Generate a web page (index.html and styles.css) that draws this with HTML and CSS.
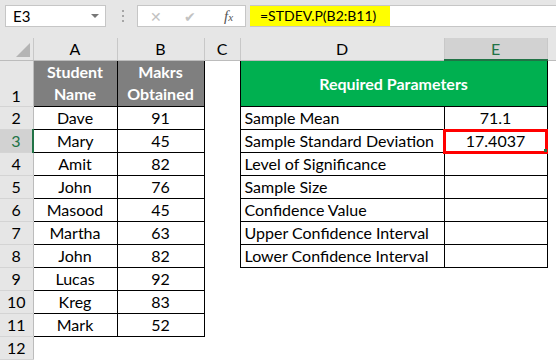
FILE: index.html
```html
<!DOCTYPE html>
<html lang="en">
<head>
    <meta charset="UTF-8">
    <meta name="viewport" content="width=device-width, initial-scale=1.0">
    <title>Sample Standard Deviation</title>
    <link rel="stylesheet" href="styles.css">
</head>
<body>
    <div class="toolbar">
        <div class="name-box">
            <span>E3</span>
            <span class="drop"></span>
        </div>
        <div class="dots">
            <span></span><span></span><span></span>
        </div>
        <div class="fx-box">
            <span class="btn cancel">&#x2715;</span>
            <span class="btn ok">&#x2714;</span>
            <span class="btn fx">f<i>x</i></span>
        </div>
        <div class="formula">
            <span class="hl">=STDEV.P(B2:B11)</span>
        </div>
    </div>

    <table class="sheet">
        <colgroup>
            <col style="width:33px">
            <col style="width:84px">
            <col style="width:87px">
            <col style="width:36px">
            <col style="width:204px">
            <col style="width:103px">
            <col>
        </colgroup>
        <tr class="col-head">
            <th class="corner"><span class="tri"></span></th>
            <th>A</th>
            <th>B</th>
            <th>C</th>
            <th>D</th>
            <th class="sel">E</th>
            <th class="last"></th>
        </tr>
        <tr class="r1">
            <th class="rh bottom">1</th>
            <td class="box head">Student<br>Name</td>
            <td class="box head">Makrs<br>Obtained</td>
            <td></td>
            <td class="box green" colspan="2">Required Parameters</td>
            <td></td>
        </tr>
        <tr>
            <th class="rh">2</th>
            <td class="box">Dave</td>
            <td class="box">91</td>
            <td></td>
            <td class="box label">Sample Mean</td>
            <td class="box">71.1</td>
            <td></td>
        </tr>
        <tr>
            <th class="rh sel">3</th>
            <td class="box">Mary</td>
            <td class="box">45</td>
            <td></td>
            <td class="box label">Sample Standard Deviation</td>
            <td class="box active">17.4037<span class="handle"></span></td>
            <td></td>
        </tr>
        <tr>
            <th class="rh">4</th>
            <td class="box">Amit</td>
            <td class="box">82</td>
            <td></td>
            <td class="box label">Level of Significance</td>
            <td class="box"></td>
            <td></td>
        </tr>
        <tr>
            <th class="rh">5</th>
            <td class="box">John</td>
            <td class="box">76</td>
            <td></td>
            <td class="box label">Sample Size</td>
            <td class="box"></td>
            <td></td>
        </tr>
        <tr>
            <th class="rh">6</th>
            <td class="box">Masood</td>
            <td class="box">45</td>
            <td></td>
            <td class="box label">Confidence Value</td>
            <td class="box"></td>
            <td></td>
        </tr>
        <tr>
            <th class="rh">7</th>
            <td class="box">Martha</td>
            <td class="box">63</td>
            <td></td>
            <td class="box label">Upper Confidence Interval</td>
            <td class="box"></td>
            <td></td>
        </tr>
        <tr>
            <th class="rh">8</th>
            <td class="box">John</td>
            <td class="box">82</td>
            <td></td>
            <td class="box label">Lower Confidence Interval</td>
            <td class="box"></td>
            <td></td>
        </tr>
        <tr>
            <th class="rh">9</th>
            <td class="box">Lucas</td>
            <td class="box">92</td>
            <td></td><td></td><td></td><td></td>
        </tr>
        <tr>
            <th class="rh">10</th>
            <td class="box">Kreg</td>
            <td class="box">83</td>
            <td></td><td></td><td></td><td></td>
        </tr>
        <tr>
            <th class="rh">11</th>
            <td class="box">Mark</td>
            <td class="box">52</td>
            <td></td><td></td><td></td><td></td>
        </tr>
        <tr>
            <th class="rh">12</th>
            <td></td><td></td><td></td><td></td><td></td><td></td>
        </tr>
    </table>
</body>
</html>
```

FILE: styles.css
```css
body {
    margin: 0;
    background: #fff;
    font-family: Lato, "Open Sans", sans-serif;
    color: #000;
    overflow: hidden;
}

/* formula bar */
.toolbar {
    display: flex;
    align-items: center;
    height: 38px;
    padding: 0 0 6px 5px;
    box-sizing: border-box;
    background: #e6e6e6;
}
.name-box {
    display: flex;
    align-items: center;
    justify-content: space-between;
    width: 101px;
    height: 22px;
    box-sizing: border-box;
    padding: 0 6px 0 7px;
    background: #fff;
    border: 1px solid #c6c6c6;
    font-size: 15px;
}
.drop {
    width: 0;
    height: 0;
    border-left: 4px solid transparent;
    border-right: 4px solid transparent;
    border-top: 4px solid #777;
}
.dots {
    display: flex;
    flex-direction: column;
    gap: 3px;
    margin: 0 13px 0 16px;
}
.dots span {
    width: 2px;
    height: 2px;
    background: #a6a6a6;
}
.fx-box {
    display: flex;
    align-items: center;
    width: 109px;
    height: 22px;
    box-sizing: border-box;
    background: #fff;
    border: 1px solid #c6c6c6;
}
.btn {
    font-size: 14px;
    color: #c2c2c2;
}
.cancel { margin-left: 12px; }
.ok { margin-left: 22px; }
.fx {
    margin-left: 28px;
    color: #555;
    font-family: "Liberation Serif", serif;
    font-style: italic;
    font-size: 15px;
}
.fx i { font-size: 11px; }
.formula {
    flex: 1;
    height: 22px;
    margin-left: 4px;
    box-sizing: border-box;
    background: #fff;
    border-top: 1px solid #c6c6c6;
    border-bottom: 1px solid #c6c6c6;
    display: flex;
}
.hl {
    background: #ffff00;
    padding: 0 14px 0 10px;
    font-size: 14px;
    line-height: 20px;
}

/* grid */
.sheet {
    border-collapse: collapse;
    table-layout: fixed;
    width: 556px;
    font-size: 16px;
}
.sheet td, .sheet th {
    padding: 0;
    height: 22px;
    line-height: 20px;
    text-align: center;
    font-weight: normal;
    white-space: nowrap;
}
.sheet .col-head th {
    height: 21px;
    background: #e6e6e6;
    border-left: 1px solid #c8c8c8;
    border-bottom: 1px solid #bcbcbc;
}
.sheet .col-head th.corner { border-left: none; position: relative; }
.sheet .col-head th.sel {
    background: #d2d2d2;
    color: #217346;
    border-bottom: 2px solid #217346;
}
.tri {
    position: absolute;
    right: 3px;
    bottom: 3px;
    width: 0;
    height: 0;
    border-left: 14px solid transparent;
    border-bottom: 14px solid #b4b4b4;
}
.sheet .rh {
    background: #e6e6e6;
    border-right: 1px solid #bcbcbc;
    border-bottom: 1px solid #d4d4d4;
}
.sheet .rh.bottom { vertical-align: bottom; }
.sheet .rh.sel {
    background: #d2d2d2;
    color: #217346;
    border-right: 2px solid #217346;
}
.sheet .r1 td, .sheet .r1 th { height: 45px; }
.box { border: 1px solid #000; }
.sheet td.head {
    background: #7f7f7f;
    color: #fff;
    font-weight: bold;
    line-height: 22px;
}
.sheet td.green {
    background: #00b050;
    color: #fff;
    font-weight: bold;
}
.sheet td.label {
    text-align: left;
    padding-left: 4px;
}
.active {
    position: relative;
    outline: 3px solid #f00;
    outline-offset: -2px;
}
.handle {
    position: absolute;
    right: 0;
    bottom: 0;
    width: 3px;
    height: 3px;
    background: #217346;
}
```
